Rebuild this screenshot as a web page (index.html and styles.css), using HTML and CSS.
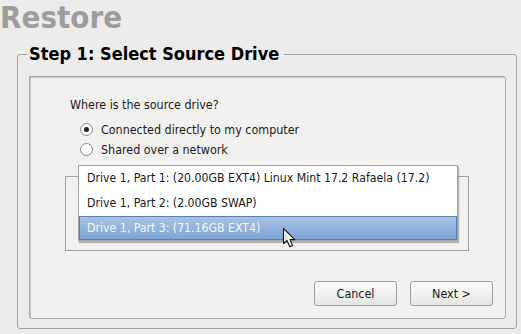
FILE: index.html
```html
<!DOCTYPE html>
<html>
  <head>
    <meta http-equiv="Content-Type" content="text/html; charset=utf-8"/>
    <title>Restore</title>
    <link rel="stylesheet" href="styles.css">
  </head>
  <body>
  <div class="window">

    <h1 class="page_title">Restore</h1>

    <fieldset class="step_box">
      <legend class="step_title">Step 1: Select Source Drive</legend>

      <div class="panel">
        <p class="question">Where is the source drive?</p>

        <label class="radio_row">
          <span class="radio checked"></span>
          <span>Connected directly to my computer</span>
        </label>
        <label class="radio_row">
          <span class="radio"></span>
          <span>Shared over a network</span>
        </label>

        <div class="drive_frame"></div>

        <div class="buttons">
          <button class="btn">Cancel</button>
          <button class="btn">Next &gt;</button>
        </div>
      </div>
    </fieldset>

    <!-- open combo popup, lies over the frame -->
    <ul class="drive_list">
      <li>Drive 1, Part 1: (20.00GB EXT4) Linux Mint 17.2 Rafaela (17.2)</li>
      <li>Drive 1, Part 2: (2.00GB SWAP)</li>
      <li class="selected">Drive 1, Part 3: (71.16GB EXT4)</li>
    </ul>

    <svg class="cursor" width="15" height="22" viewBox="0 0 15 22">
      <path d="M1.5 1.5 L1.5 16.5 L5 13.5 L7.8 19.8 L10.6 18.6 L8 12.6 L12.8 12.6 Z" fill="#fafafa" stroke="#111" stroke-width="1.1" stroke-linejoin="round"/>
      <path d="M2.8 4 L2.8 13.5 L6.5 11.5 Z" fill="#dcdcdc"/>
    </svg>

  </div>
  </body>
</html>
```

FILE: styles.css
```css
html, body { margin: 0; padding: 0; }
body { background: #edeceb; font-family: "DejaVu Sans Condensed", "DejaVu Sans", sans-serif; font-stretch: condensed; color: #1a1a1a; }

.window { position: relative; width: 521px; height: 334px; overflow: hidden; }

h1.page_title {
  margin: 0;
  height: 36px;
  font-size: 31px;
  line-height: 34px;
  font-weight: bold;
  color: #9d9d9c;
}

fieldset.step_box {
  margin: 8px 0 0 17px;
  width: 500px;
  height: 285px;
  box-sizing: border-box;
  padding: 12px 10px 9px 11px;
  border: 1px solid #a6a5a3;
  border-radius: 3px;
}
legend.step_title {
  margin-left: -2px;
  padding: 0 5px 0 2px;
  font-size: 18px;
  font-weight: bold;
  color: #000;
  line-height: 20px;
}

div.panel {
  position: relative;
  height: 100%;
  box-sizing: border-box;
  background: #f2f1f0;
  border: 1px solid #a8a7a5;
  box-shadow: inset 1px 1px 0 #c9c8c6;
  border-radius: 0 3px 3px 3px;
  display: flex;
  flex-direction: column;
  padding: 20px 12px 12px 40px;
  font-size: 12.4px;
}

p.question { margin: 0 0 6px 0; line-height: 16px; }

label.radio_row {
  display: flex;
  align-items: center;
  gap: 8px;
  height: 20px;
  margin-left: 10px;
}
span.radio {
  width: 11px;
  height: 11px;
  border: 1px solid #8a8987;
  border-radius: 50%;
  background: #fbfbfa;
  position: relative;
}
span.radio.checked::after {
  content: "";
  position: absolute;
  left: 3px; top: 3px;
  width: 5px; height: 5px;
  border-radius: 50%;
  background: #222;
}

div.drive_frame {
  margin: 17px 0 0 -5px;
  width: 404px;
  height: 75px;
  box-sizing: border-box;
  border: 1px solid #a2a1a0;
}

div.buttons {
  margin-top: auto;
  display: flex;
  justify-content: flex-end;
  gap: 13px;
}
button.btn {
  width: 83px;
  height: 25px;
  font-family: inherit;
  font-stretch: condensed;
  font-size: 12.4px;
  color: #1a1a1a;
  border: 1px solid #9c9b99;
  border-radius: 3px;
  background: linear-gradient(#fbfbfa, #e6e5e3);
}

ul.drive_list {
  position: absolute;
  left: 78px;
  top: 165px;
  width: 380px;
  margin: 0;
  padding: 0;
  list-style: none;
  box-sizing: border-box;
  background: #fff;
  border: 1px solid #a4a3a1;
  box-shadow: 1px 2px 1px rgba(0,0,0,0.25);
  font-size: 12.2px;
}
ul.drive_list li {
  height: 25px;
  line-height: 25px;
  padding-left: 8px;
  white-space: nowrap;
}
ul.drive_list li.selected {
  height: 24px;
  line-height: 22px;
  color: #f4f7fb;
  background: linear-gradient(#a6c3e7, #7fa4d3);
  border: 1px solid #5c80b1;
  box-sizing: border-box;
  padding-left: 7px;
}

svg.cursor { position: absolute; left: 282px; top: 227px; }
```
